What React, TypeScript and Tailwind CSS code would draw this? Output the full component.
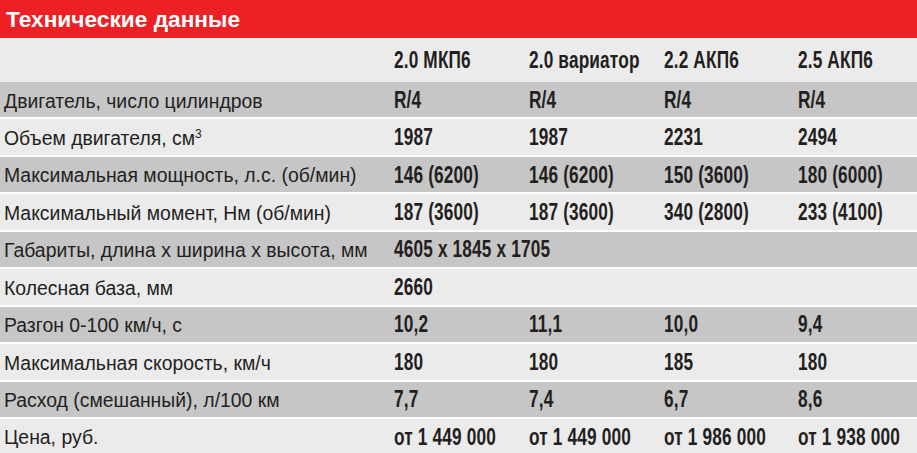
import React from 'react';

const columns = ['2.0 МКП6', '2.0 вариатор', '2.2 АКП6', '2.5 АКП6'];

type Row = { label: React.ReactNode; values: string[]; span?: boolean };

const rows: Row[] = [
  { label: 'Двигатель, число цилиндров', values: ['R/4', 'R/4', 'R/4', 'R/4'] },
  {
    label: (
      <>
        Объем двигателя, см<sup className="text-[12px] relative -top-[7px]">3</sup>
      </>
    ),
    values: ['1987', '1987', '2231', '2494'],
  },
  { label: 'Максимальная мощность, л.с. (об/мин)', values: ['146 (6200)', '146 (6200)', '150 (3600)', '180 (6000)'] },
  { label: 'Максимальный момент, Нм (об/мин)', values: ['187 (3600)', '187 (3600)', '340 (2800)', '233 (4100)'] },
  { label: 'Габариты, длина х ширина х высота, мм', values: ['4605 х 1845 х 1705'], span: true },
  { label: 'Колесная база, мм', values: ['2660'], span: true },
  { label: 'Разгон 0-100 км/ч, с', values: ['10,2', '11,1', '10,0', '9,4'] },
  { label: 'Максимальная скорость, км/ч', values: ['180', '180', '185', '180'] },
  { label: 'Расход (смешанный), л/100 км', values: ['7,7', '7,4', '6,7', '8,6'] },
  { label: 'Цена, руб.', values: ['от 1 449 000', 'от 1 449 000', 'от 1 986 000', 'от 1 938 000'] },
];

// condensed bold look: Arial-metric bold squeezed horizontally
function Value({ text }: { text: string }) {
  return (
    <span className="inline-block origin-left scale-x-[0.75] whitespace-nowrap font-['Liberation_Sans',sans-serif] font-bold text-[23px] leading-none tracking-[0.2px]">
      {text}
    </span>
  );
}

export default function App() {
  return (
    <div className="w-[917px] h-[453px] overflow-hidden bg-[#ebebeb] text-[#231f20]">
      <div className="h-[38px] bg-[#ed2024] flex items-center pl-[6px]">
        <h1 className="text-white text-[22.7px] font-bold font-['Liberation_Sans',sans-serif] leading-none">
          Технические данные
        </h1>
      </div>

      <div className="h-[44px] pt-[3px] grid grid-cols-[394px_135px_135px_134px_1fr] items-center">
        <div />
        {columns.map((c) => (
          <div key={c} className="whitespace-nowrap">
            <Value text={c} />
          </div>
        ))}
      </div>

      {rows.map((row, i) => (
        <div
          key={i}
          className={`h-[37.44px] pt-[3px] border-b-2 border-white grid grid-cols-[394px_135px_135px_134px_1fr] items-center ${
            i % 2 === 0 ? 'bg-[#c6c6c6]' : 'bg-[#ebebeb]'
          }`}
        >
          <div className="font-['Liberation_Sans',sans-serif] text-[19.4px] leading-none pl-[4px] whitespace-nowrap">
            {row.label}
          </div>
          {row.span ? (
            <div className="col-span-4 whitespace-nowrap">
              <Value text={row.values[0]} />
            </div>
          ) : (
            row.values.map((v, j) => (
              <div key={j} className="whitespace-nowrap">
                <Value text={v} />
              </div>
            ))
          )}
        </div>
      ))}
    </div>
  );
}
